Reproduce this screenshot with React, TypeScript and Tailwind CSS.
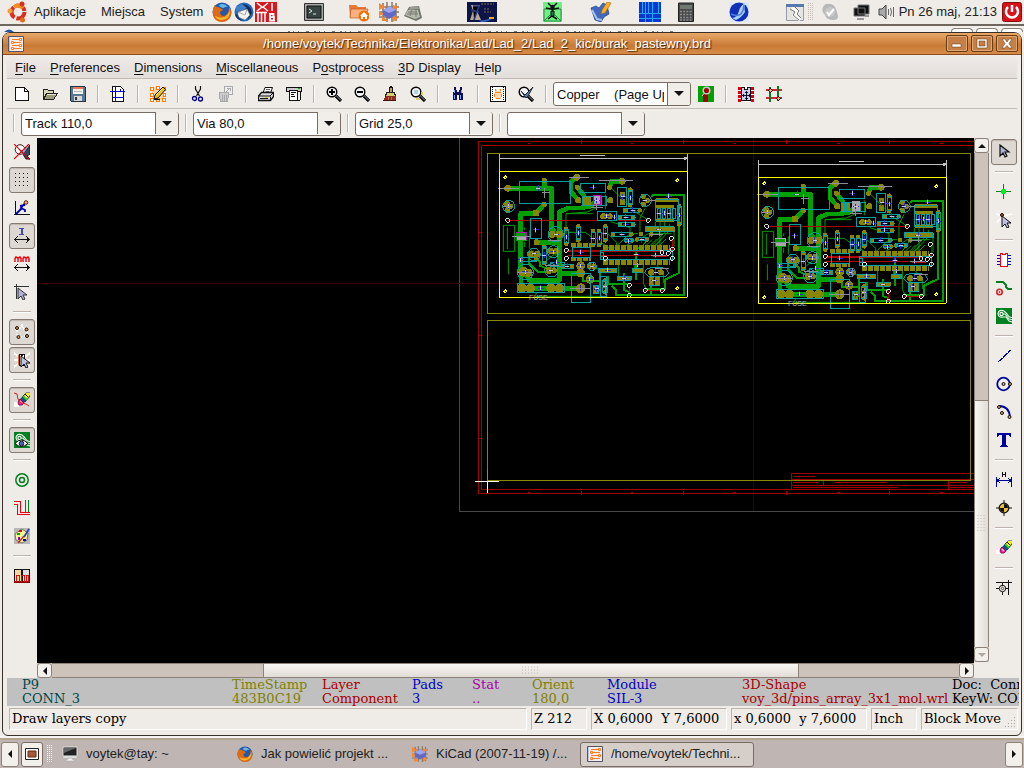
import type { ReactNode } from 'react'

interface Tool {
  label: string
  icon: ReactNode
  pressed?: boolean
}

const GREEN = '#00a000'
const OLIVE = '#868600'
const CYAN = '#00a0a0'

function Icon({ children, crisp = true }: { children: ReactNode; crisp?: boolean }) {
  return (
    <svg
      width="16"
      height="16"
      viewBox="0 0 16 16"
      fill="none"
      shapeRendering={crisp ? 'crispEdges' : 'auto'}
      className="shrink-0"
      aria-hidden="true"
    >
      {children}
    </svg>
  )
}

const cursorPath = 'M0 0v11l3-3 2 4 2-1-2-4h4z'

const magnifier = (
  <g shapeRendering="auto">
    <circle cx="6" cy="6" r="4.800" fill="#f4f4f8" stroke="#000" strokeWidth="1.400" />
    <path d="M10 10l5 5" stroke="#000" strokeWidth="3.200" />
    <path d="M10.500 10l4.500 4.500" stroke="#9a9aaa" strokeWidth="1" />
  </g>
)

const eraser = (
  <g shapeRendering="auto">
    <path d="M9 4l3-3h4v3l-5 6-3-3z" fill="#187838" stroke="#111" strokeWidth=".8" />
    <path d="M12 1h4v2l-3 4-3-3z" fill="#f8f020" />
    <path d="M11 2l3 3" stroke="#111" />
    <path d="M8 5l4 4-2 2-4-4z" fill="#105088" />
    <path d="M9 4l4 4" stroke="#20d840" strokeWidth="1.300" />
    <path d="M6 7l4 4-2 2H5l-1-2 1-3z" fill="#ff20a0" stroke="#700038" strokeWidth=".8" />
    <path d="M6 9l2 2" stroke="#ffc0f0" strokeWidth="1.500" />
  </g>
)

const greenZone = (
  <>
    <path d="M0 0h16v16H0z" fill="#008020" />
    <g shapeRendering="auto" stroke="#e8f4e8" strokeWidth="1.200">
      <path d="M16 9.500q-3 0-4-2T8 3Q3 1 2 5.500 2.500 10 7 9l3 0 3 4 3 1" />
      <circle cx="5.500" cy="6" r="1.600" />
      <path d="M7 6h2l4 5 3 .5" />
    </g>
  </>
)

const boardIcon = (
  <>
    <path d="M.5.500h15v15H.5z" fill="#f8ece8" stroke="#55556a" />
    <path d="M1 1h1v14H1z" fill="#b8c4f0" />
    <path d="M4 3.500h7M5 6.500h8M4 9.500h7M5 12.500h8" stroke="#ff7a20" />
    <path d="M11.500 2.500h2v2h-2zM3.500 5.500h2v2h-2zM11.500 8.500h2v2h-2zM3.500 11.500h2v2h-2z" fill="#fff0e0" stroke="#ff7a20" />
  </>
)

const fileTools: Tool[][] = [
  [
    {
      label: 'New',
      icon: <path d="M1.500 1.500h9l4 4v9h-13zM10.500 1.500v4h4" fill="#fff" stroke="#111" />,
    },
    {
      label: 'Open',
      icon: (
        <>
          <path d="M1.500 13.500v-10h4l1 1h5v3" fill="#d8d8b8" stroke="#222" />
          <path d="M1.500 13.500l3-6h11l-4 6z" fill="#9a9a7a" stroke="#222" />
          <path d="M5 8.500h9" stroke="#e8e8d0" />
        </>
      ),
    },
    {
      label: 'Save',
      icon: (
        <>
          <path d="M.5.500h14l1 1v14H1.500l-1-1z" fill="#5b7892" stroke="#223344" />
          <path d="M3 1h10v7H3z" fill="#f4f0ea" />
          <path d="M3 1h10v2H3z" fill="#e07a60" />
          <path d="M4 5.500h8" stroke="#bbb" />
          <path d="M4 10h8v5H4z" fill="#d8d8d8" />
          <path d="M5 11h2v3H5z" fill="#334" />
        </>
      ),
    },
  ],
  [
    {
      label: 'Page settings',
      icon: (
        <>
          <path d="M2.500.500h8l3 3v12h-11z" fill="#fff" stroke="#111" />
          <path d="M0 5.500h15M5.500 0v16M3 11.500h10M10.500 6v-3" stroke="#0000d0" />
        </>
      ),
    },
  ],
  [
    {
      label: 'Module editor',
      icon: (
        <>
          <path d="M2 2h12v12H2z" fill="#ffd0a0" />
          <path d="M.5 1.500h3v3h-3zM6.500.500h3v3h-3zM12.500 1.500h3v3h-3zM.5 7.500h3v3h-3zM.5 12.500h3v3h-3zM6.500 12.500h3v3h-3zM12.500 12.500h3v3h-3zM13.500 7.500h2v3h-2z" stroke="#ff7a00" fill="#fff" />
          <g shapeRendering="auto">
            <path d="M4 13l1-4 8-8 2.500 2.500L8 12z" fill="#e8c020" stroke="#111" />
            <path d="M6 9l7-7" stroke="#fff080" />
          </g>
          <path d="M4 13.500h6" stroke="#111" />
        </>
      ),
    },
  ],
  [
    {
      label: 'Cut',
      icon: (
        <g shapeRendering="auto">
          <path d="M5.500 0v3l4 7M10.500 0v3l-4 7" stroke="#111" strokeWidth="1.200" />
          <circle cx="4.500" cy="12.500" r="2" stroke="#000090" strokeWidth="1.300" />
          <circle cx="10.500" cy="13" r="2" stroke="#000090" strokeWidth="1.300" />
        </g>
      ),
    },
    {
      label: 'Copy',
      icon: (
        <>
          <path d="M6.500.500h8v8h-8z" fill="#eee" stroke="#aaa" />
          <path d="M8 6l4-4M9 2h3v3" stroke="#aaa" />
          <path d="M1.500 6.500h9v3l-1 6h-7l-1-6z" fill="#ccc" stroke="#aaa" />
          <path d="M4.500 9v6M6.500 9v6M8.500 9v6" stroke="#aaa" />
        </>
      ),
    },
  ],
  [
    {
      label: 'Print',
      icon: (
        <g shapeRendering="auto">
          <path d="M5 7l2-5.500h7.500l-2 5.500" fill="#fff" stroke="#111" />
          <path d="M8 3.500h4M7.500 5.500h4" stroke="#666" />
          <path d="M.5 10l3-3.500h12v4l-3 4H.5z" fill="#ddd" stroke="#111" strokeWidth="1.300" />
          <path d="M1 10h11l3-3M12.500 10.500V14" stroke="#111" />
          <path d="M2 12.500h8" stroke="#111" />
          <path d="M7 11h3v1H7z" fill="#e8d020" />
        </g>
      ),
    },
    {
      label: 'Plot',
      icon: (
        <>
          <path d="M.5 1.500h15v4H.5z" fill="#ccc" stroke="#111" />
          <path d="M3.500 4.500h8v10h-8z" fill="#fff" stroke="#111" />
          <path d="M5 6.500h5M5 8.500h3M5 10.500h4M14.500 5v9M12 14.500h2" stroke="#111" />
          <path d="M12 2h2v1h-2z" fill="#0a0" />
        </>
      ),
    },
  ],
  [
    { label: 'Zoom in', icon: <>{magnifier}<path d="M3 6h6M6 3v6" stroke="#000" strokeWidth="2" /></> },
    { label: 'Zoom out', icon: <>{magnifier}<path d="M3 6h6" stroke="#000" strokeWidth="2" /></> },
    {
      label: 'Redraw',
      icon: (
        <>
          <path d="M7.500 6V2.500l1-2h1l1 2V6" fill="#c0a060" stroke="#111" />
          <path d="M4.500 6.500h8l1 4h-10z" fill="#d8cf70" stroke="#222" />
          <path d="M4 10h10v5H1z" fill="#8b3020" />
          <path d="M1 14.500h13" stroke="#4a1008" />
          <path d="M6.500 11v3M9.500 11v3" stroke="#c06a50" />
        </>
      ),
    },
    {
      label: 'Zoom fit',
      icon: (
        <>
          {magnifier}
          <path d="M4 4h4v4H4z" fill="#b0d0e0" />
          <path d="M11 6h2v3h-2zM6 12h4v2H6z" fill="#d8d060" />
        </>
      ),
    },
  ],
  [
    {
      label: 'Find',
      icon: (
        <>
          <path d="M4 1h2v3h1v2h2V4h1V1h2v4l1 3v6h-4v-5H7v5H3V8l1-3z" fill="#101050" />
          <path d="M4.500 4v3M11.500 4v3M4.500 9v4M10.500 9v4" stroke="#80a0ff" />
        </>
      ),
    },
  ],
  [
    {
      label: 'Read netlist',
      icon: (
        <>
          <path d="M.5.500h15v15H.5z" fill="#fff" stroke="#111" />
          <path d="M2.500 1v14M13.500 1v14" stroke="#111" strokeDasharray="1 1" />
          <path d="M5 3h2v2h2V3h2v3l1 2-1 5H5L4 8l1-2z" fill="#ffd8b0" />
          <path d="M5 3v2M10.500 3v2M5 6.500h6M4.500 8v3M11.500 8v3M6 12.500h4" stroke="#ff7a10" />
        </>
      ),
    },
    {
      label: 'Check rules',
      icon: (
        <>
          {magnifier}
          <path d="M3 5l4 4 8-8-5 9-2 2z" fill="#607898" stroke="#203040" shapeRendering="auto" />
        </>
      ),
    },
  ],
]

const layerTools: Tool[][] = [
  [
    { label: 'Auto move', icon: (
      <>
        <path d="M1 0h14v16H1z" fill="#fff" />
        <path d="M1.500.500v15M14.500.500v15" stroke="#d80010" strokeWidth="3" strokeDasharray="3 1" />
        <path d="M3.500 1.500h3v2h3v-2h3v13h-9z" fill="#c8d0f0" stroke="#111" />
        <path d="M8.500 5v9M4 9.500h9M7 6.500h3M7 12.500h3M5.500 8v3M11.500 8v3" stroke="#101030" />
      </>
    ) },
    { label: 'Auto route', icon: (
      <>
        <path d="M0 4h16M0 12h16" stroke="#e02030" strokeWidth="2" />
        <path d="M4 1v15M12 0v15" stroke="#008020" strokeWidth="2" />
        <circle cx="4.500" cy="4.500" r="1.800" fill="#f8b070" stroke="#111" />
        <circle cx="12.500" cy="12.500" r="1.800" fill="#f8b070" stroke="#111" />
      </>
    ) },
  ],
]

const leftTools: Tool[][] = [
  [
    { label: 'DRC off', icon: (
      <g shapeRendering="auto">
        <circle cx="6" cy="5.500" r="4.800" fill="#fff" stroke="#222" />
        <path d="M7 7l3 2 6-8v9l-3 2 3 3h-4z" fill="#304860" stroke="#101820" />
        <path d="M6 6l3 3 4-6" stroke="#88a8c8" strokeWidth="1.500" />
        <path d="M0 0l16 16M15 0L0 15" stroke="#e00010" strokeWidth="1.200" />
      </g>
    ) },
    { label: 'Grid', pressed: true, icon: <path d="M1 1.500h15M1 5.500h15M1 9.500h15M1 13.500h15" stroke="#111" strokeDasharray="1 3" /> },
    { label: 'Polar coordinates', icon: (
      <>
        <path d="M1.500 1v14M0 14.500h16" stroke="#111" />
        <path d="M11 3L7 8l4 2v2M8 8L2 14M11 5L6 6" stroke="#0000b0" strokeWidth="1.800" shapeRendering="auto" />
        <circle cx="12" cy="2.500" r="1.800" fill="#f8b070" stroke="#5a2010" shapeRendering="auto" />
      </>
    ) },
    { label: 'Inches', pressed: true, icon: (
      <>
        <path d="M5 .500h5M5 6.500h5" stroke="#4848b8" />
        <path d="M7.500 0v7" stroke="#4848b8" strokeWidth="2" />
        <path d="M1 11.500h14M4 8l-3 3.500L4 15M12 8l3 3.500-3 3.500" stroke="#111" />
      </>
    ) },
    { label: 'Millimetres', icon: (
      <>
        <path d="M1 6V2.500L2 1l2 1v4M4 2l2-1 1 1.500V6M9 6V2.500L10 1l2 1v4M12 2l2-1 1 1.500V6" stroke="#f00010" strokeWidth="1.400" shapeRendering="auto" />
        <path d="M1 11.500h14M4 8l-3 3.500L4 15M12 8l3 3.500-3 3.500" stroke="#111" />
      </>
    ) },
    { label: 'Cursor shape', icon: (
      <>
        <path d="M0 2.500h15M2.500 0v15" stroke="#333" />
        <path d={cursorPath} transform="translate(4 4)" fill="#b0b0d8" stroke="#333" shapeRendering="auto" />
      </>
    ) },
  ],
  [
    { label: 'Show ratsnest', pressed: true, icon: (
      <>
        <path d="M3 4l9 1M12 5l2 8M4 13l9-1M2 4l2 9M8 0l1 5" stroke="#fff" strokeWidth="2" strokeDasharray="4 2" />
        <g fill="#d89050" stroke="#111" shapeRendering="auto">
          <circle cx="3" cy="4" r="1.500" /><circle cx="12.500" cy="5.500" r="1.500" />
          <circle cx="4.500" cy="13" r="1.500" /><circle cx="13" cy="12" r="1.500" />
        </g>
      </>
    ) },
    { label: 'Module ratsnest', pressed: true, icon: (
      <>
        <path d="M0 1l5 4M0 8h5M0 15l5-4M16 1l-5 4M16 8h-5M16 15l-5-4" stroke="#fff" strokeWidth="2" />
        <path d="M4.500 3v10" stroke="#e86a10" />
        <path d="M5.500 2.500h2v1h1v-1h2v11h-5z" fill="#fff" stroke="#111" />
        <path d={cursorPath} transform="translate(7 4)" fill="#c0c0e0" stroke="#111" shapeRendering="auto" />
      </>
    ) },
  ],
  [
    { label: 'Auto delete track', pressed: true, icon: (
      <>
        <path d="M0 10h5v5H0z" fill="#fff" />
        {eraser}
        <path d="M0 1l3 1 1 5 3 4 5 1 3 2" stroke="#e02020" shapeRendering="auto" />
      </>
    ) },
  ],
  [
    { label: 'Show zones', pressed: true, icon: (
      <g shapeRendering="auto">
        {greenZone}
        <path d="M1 11.500q6-7 13 0-7 6-13 0z" fill="#fff" stroke="#111" />
        <circle cx="7.500" cy="11.500" r="2.300" fill="#5060a0" stroke="#202050" />
      </g>
    ) },
  ],
  [
    { label: 'Show pads', icon: (
      <g shapeRendering="auto">
        <circle cx="8" cy="8" r="6.200" stroke="#008020" strokeWidth="1.500" />
        <circle cx="8" cy="8" r="2.500" stroke="#008020" strokeWidth="1.500" />
      </g>
    ) },
    { label: 'Show tracks', icon: (
      <>
        <path d="M0 1.500h6.500v11H16M0 4.500h3.500v10H16" stroke="#f00010" />
        <path d="M11.500 0v12M14.500 0v12" stroke="#008020" />
      </>
    ) },
    { label: 'High contrast', icon: (
      <>
        <path d="M0 0h16v16H0z" fill="#b8b8b8" />
        <path d="M8 1l6 4-1 7-5 3-6-3-1-6z" fill="#fff890" stroke="#333" strokeWidth=".6" shapeRendering="auto" />
        <path d="M5 2h3v2H5z" fill="#e00" /><path d="M3 5h3v2H3z" fill="#0a0" />
        <path d="M4 9h2v3H4z" fill="#80c" /><path d="M9 11h3v2H9z" fill="#00d" />
        <path d="M15 1l-5 8" stroke="#2040c0" strokeWidth="1.800" shapeRendering="auto" />
        <path d="M10 8l-6 7" stroke="#c02020" strokeWidth="1.300" shapeRendering="auto" />
      </>
    ) },
  ],
  [
    { label: 'Layers toolbar', icon: (
      <>
        <path d="M.5 1.500h7v13h-7z" fill="#f0d8a0" stroke="#111" />
        <path d="M8.500 1.500h7v13h-7z" fill="#e0e0e0" stroke="#111" />
        <path d="M0 14h16" stroke="#800" strokeWidth="2" />
        <path d="M2.500 14V7.500h3V14M7.500 14V7.500h3V14M12.500 14V7.500h2V14" stroke="#e01010" />
      </>
    ) },
  ],
]

const rightTools: Tool[][] = [
  [{ label: 'Select', pressed: true, icon: <path d={cursorPath} transform="translate(4 1)" fill="#b0b0d8" stroke="#111" strokeWidth="1.200" shapeRendering="auto" /> }],
  [
    { label: 'Highlight net', icon: (
      <>
        <path d="M0 7.500h15M7.500 0v15" stroke="#008020" />
        <circle cx="7.500" cy="7.500" r="2.500" fill="#00f020" />
      </>
    ) },
    { label: 'Local ratsnest', icon: (
      <g shapeRendering="auto">
        <path d="M0 2l6 2M16 2L8 4M1 10l4-4" stroke="#fff" strokeWidth="1.500" />
        <path d={cursorPath} transform="translate(6 4)" fill="#c0c0e0" stroke="#111" />
        <circle cx="6" cy="3" r="1.500" fill="#a05020" stroke="#111" />
      </g>
    ) },
  ],
  [
    { label: 'Add module', icon: (
      <>
        <path d="M1 3.500h14M1 6.500h14M1 9.500h14M1 12.500h14" stroke="#0000d0" />
        <path d="M4.500 1.500h2v1h3v-1h2v13h-7z" fill="#fff" stroke="#f00010" />
      </>
    ) },
    { label: 'Add track', icon: (
      <g shapeRendering="auto">
        <path d="M0 2h7l3 3v2l2 2h4" stroke="#008020" strokeWidth="2" />
        <circle cx="3.500" cy="12" r="2.700" fill="#fff" stroke="#d02020" strokeWidth="1.600" />
        <circle cx="3.500" cy="12" r="1" fill="#d02020" />
      </g>
    ) },
    { label: 'Add zone', icon: greenZone },
  ],
  [
    { label: 'Add line', icon: <path d="M2 14L15 2" stroke="#0000a0" strokeWidth="1.300" strokeDasharray="6 1" /> },
    { label: 'Add circle', icon: (
      <g shapeRendering="auto">
        <circle cx="7.500" cy="8" r="6.300" stroke="#0000a0" strokeWidth="1.800" />
        <circle cx="7.500" cy="8" r="1.500" fill="#d8a070" stroke="#111" />
        <circle cx="14" cy="8" r="1.500" fill="#d8a070" stroke="#111" />
      </g>
    ) },
    { label: 'Add arc', icon: (
      <g shapeRendering="auto">
        <path d="M3 2q10 0 11 11" stroke="#0000a0" strokeWidth="1.800" />
        <g fill="#d8a070" stroke="#111">
          <circle cx="3" cy="3" r="1.500" /><circle cx="6" cy="9" r="1.500" /><circle cx="13.500" cy="13" r="1.500" />
        </g>
      </g>
    ) },
    { label: 'Add text', icon: <path d="M1 1h14v4h-1l-1-2h-3v10l2 1v1H4v-1l2-1V3H3L2 5H1z" fill="#0000a0" /> },
  ],
  [
    { label: 'Add dimension', icon: (
      <>
        <path d="M6.500 0v5M9.500 0v5M7 2.500h2" stroke="#111" />
        <path d="M.5 5v10M15.500 5v10M1 8.500h14M4 6L1 8.500 4 11M12 6l3 2.500L12 11" stroke="#0000a0" />
      </>
    ) },
    { label: 'Add target', icon: (
      <g shapeRendering="auto">
        <path d="M0 8h16M8 0v16" stroke="#111" />
        <circle cx="8" cy="8" r="4.800" fill="#e8c040" stroke="#111" strokeWidth="1.300" />
        <path d="M8 8V4a4 4 0 0 1 4 4zM8 8v4a4 4 0 0 1-4-4z" fill="#111" />
      </g>
    ) },
  ],
  [{ label: 'Delete item', icon: <><path d="M0 10h5v4H0z" fill="#fff" />{eraser}</> }],
  [
    { label: 'Offset origin', icon: (
      <>
        <path d="M0 2.500h16M12.500 0v15M0 8.500h3M9 8.500h3M6.500 3v3M6.500 12v3" stroke="#111" />
        <circle cx="6.500" cy="8.500" r="3.200" stroke="#111" shapeRendering="auto" />
        <circle cx="6.500" cy="8.500" r="1.200" stroke="#555" shapeRendering="auto" />
      </>
    ) },
  ],
]

// One board, drawn on a grid of three units to the pixel
const thickTracks = [
  'M53 130h132v120l14 18', 'M163 106v24', 'M163 178l-26 27H92v175l12 8', 'M260 98l-17 12v30l22 26',
  'M397 109h-32l-6 18', 'M320 168l-20 16-30 5h-35l-27 12v205h-90l-12-20', 'M140 292h66', 'M206 385h64l10-8',
  'M90 430h182', 'M262 127l22 28', 'M93 390v36',
]
const mediumTracks = [
  'M484 155l5-6h94v302H377v-16l-12-12', 'M567 178v206l-42 20v28h-55', 'M438 405v-88l8-10', 'M118 320v36l25 24h42',
  'M402 385v50l15 6', 'M483 380v68', 'M355 392v25h62', 'M280 380v28h50', 'M132 330l18 20v12l40 18', 'M330 378v60',
]
const thinTracks = [
  'M228 268v-62l64-5 30-14', 'M228 206h80', 'M365 130l45 45 20 20', 'M346 148v45', 'M428 196l48 30', 'M465 190l-15 30v40',
  'M362 230l58 18v25', 'M330 290l35 25', 'M265 285l10 15', 'M236 262h50l20 15', 'M350 262l30 30v18', 'M510 230v80',
  'M524 232v30l-40 42', 'M538 236v20l-44 50', 'M552 260v45', 'M496 230v20l-40 55', 'M372 310l48-44h24', 'M392 312l50-30',
  'M475 284l-24 24M486 284l-24 24M500 282l-26 26M514 282l-26 26M528 282l-26 26', 'M386 355v40l20 5', 'M434 350v28',
  'M216 330h-26l-18 15', 'M118 256v52l12 14', 'M300 355l28 21h40', 'M454 280l20-14h70', 'M140 442l-4 12h210', 'M55 340v48',
  'M40 241h34v78H40zM52 247v65', 'M460 355v60l10 20', 'M500 360l20 24v30', 'M90 255v-8M97 255v-8M104 255v-8M90 290v16M97 290v16M104 290v16',
]
const outlines: [number, number, number, number][] = [
  [88, 109, 153, 66], [272, 115, 74, 27], [278, 154, 72, 27], [382, 127, 27, 58], [415, 136, 13, 44],
  [121, 220, 33, 60], [323, 200, 56, 26], [497, 163, 68, 64], [331, 316, 218, 28], [247, 307, 54, 31],
  [82, 415, 141, 27], [245, 386, 56, 86], [331, 394, 20, 60], [400, 190, 50, 13], [385, 211, 48, 13], [385, 232, 48, 13],
  [259, 247, 12, 36], [304, 262, 12, 38], [322, 262, 12, 38], [340, 247, 12, 36], [223, 254, 12, 40], [366, 264, 60, 10],
  [404, 281, 25, 10], [442, 278, 32, 10], [468, 246, 84, 14], [562, 184, 12, 52], [157, 306, 12, 50], [182, 352, 42, 12],
  [312, 421, 14, 24], [338, 408, 14, 36], [326, 371, 54, 11], [384, 395, 38, 11], [428, 371, 28, 11], [478, 396, 30, 26],
  [90, 339, 46, 10], [216, 360, 34, 10], [504, 190, 8, 30], [519, 190, 8, 30], [534, 190, 8, 30], [549, 190, 8, 30],
]
const rounds: [number, number, number][] = [
  [197, 268, 23], [56, 184, 18], [466, 166, 18], [132, 328, 19], [106, 381, 24], [184, 376, 20], [190, 320, 18], [306, 364, 13],
]
const pads: [number, number, number][] = [
  [53, 130, 10], [163, 106, 8], [163, 178, 8], [260, 97, 10], [262, 127, 8], [265, 166, 9], [397, 109, 10], [359, 127, 8],
  [361, 166, 9], [140, 292, 9], [187, 268, 11], [208, 268, 11], [272, 430, 15], [300, 403, 13], [96, 430, 14], [121, 430, 14],
  [183, 430, 14], [208, 430, 14], [272, 362, 13], [272, 384, 13], [100, 380, 15], [115, 384, 12], [122, 328, 11], [140, 328, 10],
  [178, 376, 11], [192, 376, 9], [183, 318, 10], [198, 318, 9], [300, 364, 9], [312, 364, 8], [52, 178, 9], [62, 184, 8],
  [52, 195, 8], [460, 154, 8], [460, 178, 8], [472, 166, 8], [340, 214, 9], [360, 214, 9], [484, 382, 9], [513, 382, 9],
  [229, 252, 7], [229, 296, 7], [265, 244, 7], [265, 286, 7], [310, 258, 7], [310, 300, 7], [328, 258, 7], [328, 300, 7],
  [346, 244, 7], [346, 286, 7], [421, 134, 7], [421, 180, 7], [407, 196, 7], [449, 196, 7], [390, 217, 7], [430, 217, 7],
  [390, 238, 7], [430, 238, 7], [369, 268, 7], [424, 268, 7], [453, 268, 7], [484, 268, 7], [408, 287, 7], [426, 287, 7],
  [441, 284, 7], [470, 284, 7], [568, 184, 7], [568, 238, 7], [163, 306, 7], [163, 354, 7], [92, 344, 7], [138, 344, 7],
  [346, 406, 7], [346, 424, 7], [346, 442, 7], [318, 426, 7], [318, 440, 7], [220, 364, 7], [246, 364, 7],
]
const padBlocks: [number, number, number, number][] = [
  [129, 196, 18, 18], [280, 156, 22, 23], [390, 140, 15, 16], [390, 162, 15, 18], [497, 160, 68, 12], [497, 180, 56, 9],
  [497, 221, 56, 10], [466, 245, 88, 15], [326, 370, 56, 13], [383, 394, 42, 12], [427, 370, 31, 13], [478, 396, 13, 28],
  [495, 396, 14, 28],
]
const vias: [number, number][] = [
  [53, 226], [475, 226], [544, 280], [547, 313], [535, 325], [516, 322], [547, 340], [346, 340], [229, 316], [229, 340],
  [418, 421], [418, 451], [466, 436], [517, 436],
]
const labels: [number, number][] = [
  [145, 130], [310, 127], [321, 168], [56, 184], [398, 155], [421, 158], [466, 166], [137, 254], [197, 268], [350, 214],
  [408, 217], [408, 238], [428, 196], [536, 154], [508, 253], [265, 265], [310, 280], [328, 280], [346, 265], [229, 275],
  [396, 268], [415, 287], [456, 284], [273, 322], [132, 325], [106, 381], [184, 376], [190, 320], [306, 364], [152, 430],
  [272, 430], [300, 403], [346, 424], [354, 376], [403, 400], [442, 360], [498, 382], [496, 331], [438, 328], [568, 211],
  [508, 205], [523, 205], [538, 205], [92, 344], [163, 331], [200, 352], [232, 364], [272, 362], [492, 408], [375, 217], [320, 432],
]
const greyLines = [
  'M24 130h64M237 97h60M155 142h24M328 106h100M40 184h26M302 187h38', 'M67 274h55M173 286h40M480 268h40M484 331h44M495 370h42M430 360h24',
  'M80 382h50M165 362h42M240 430h64M480 166h18', 'M321 175v20M321 182h-12M163 130v30M346 410v35M203 307v28M508 252v22M310 352v26',
]
const holes: [number, number][] = [[46, 97], [562, 106], [46, 439], [562, 430]]

function Board({ x, y, accent }: { x: number; y: number; accent: string }) {
  return (
    <>
      <g transform={`translate(${x} ${y}) scale(.33333)`} fill="none">
        <g stroke={GREEN} strokeLinejoin="round">
          <g strokeWidth="14">{thickTracks.map((d) => <path key={d} d={d} />)}</g>
          <g strokeWidth="6">{mediumTracks.map((d) => <path key={d} d={d} />)}</g>
          <g strokeWidth="3">{thinTracks.map((d) => <path key={d} d={d} />)}</g>
        </g>
        <path d="M78 260h32v28H78z" fill={GREEN} />
        <path d="M53 226h422M230 318h286l31-5M230 331h300M346 343h200M466 436h52M418 421v30M547 285v60M490 335h40" stroke="#b00000" strokeWidth="4" />
        <g fill={OLIVE}>
          {pads.map(([cx, cy, r]) => <circle key={`${cx}-${cy}`} cx={cx} cy={cy} r={r} />)}
          {padBlocks.map(([bx, by, w, h]) => <rect key={`${bx}-${by}`} x={bx} y={by} width={w} height={h} />)}
        </g>
        <path d="M340 307h200M340 352h200" stroke={OLIVE} strokeWidth="14" strokeDasharray="15 3" />
        <path d="M244 300h60M244 343h60" stroke={OLIVE} strokeWidth="13" strokeDasharray="15 3" />
        <g stroke={CYAN} strokeWidth="3">
          {outlines.map(([ox, oy, w, h]) => <rect key={`${ox}-${oy}`} x={ox} y={oy} width={w} height={h} />)}
          {rounds.map(([cx, cy, r]) => <circle key={`${cx}-${cy}`} cx={cx} cy={cy} r={r} />)}
          <path d="M470 372q28-10 60 0l6 12-10 12h-50l-12-14zM286 154v27M292 154v27M335 154v27M331 322h10v14h-10" />
        </g>
        <path d="M310 152h22v28h-22z" fill="#b0a0b0" stroke={accent} strokeWidth="3" />
        <path d="M79 262h31v24" stroke={accent} strokeWidth="3" />
        <path d="M82 276h26v10H82z" fill="#a8a8a8" />
        <g stroke="#2828d8" strokeWidth="3">
          {labels.map(([lx, ly]) => <path key={`${lx}-${ly}`} d={`M${lx - 9} ${ly}h18M${lx} ${ly - 9}v18`} />)}
        </g>
        <g stroke="#c8c8e8" strokeWidth="3">
          {labels.map(([lx, ly], i) => (
            <path key={`${lx}-${ly}`} d={i % 2 ? `M${lx} ${ly - 6}v12` : `M${lx - 6} ${ly}h12`} />
          ))}
        </g>
        <g stroke="#8c8c9c" strokeWidth="3">{greyLines.map((d) => <path key={d} d={d} />)}</g>
        <g stroke="#e0e0e0" strokeWidth="3">
          {vias.map(([cx, cy]) => <circle key={`${cx}-${cy}`} cx={cx} cy={cy} r="6" />)}
        </g>
        <g stroke="#ff0" strokeWidth="3">
          {holes.map(([hx, hy]) => <path key={`${hx}-${hy}`} d={`M${hx - 3} ${hy - 3}h6v6h-6zM${hx} ${hy - 6}v3M${hx - 6} ${hy}h3`} />)}
          <path d="M28.500 79.500h564v378h-564z" />
        </g>
        <path d="M28.500 28v50M592.500 28v50M28 40.500h564M270 31.500h75M30 36v10M583 37h6v6h-6" stroke="#c0c0c0" strokeWidth="3" />
      </g>
      <text x={x + 39} y={y + 155} fontSize="7" fill="#b0b0b0" fontFamily="Liberation Sans, sans-serif">FUSE</text>
    </>
  )
}

function BoardCanvas() {
  return (
    <svg className="block h-full w-full bg-black" role="img" aria-label="Board layout">
      {/* drawing units are page pixels, shifted by the corner of the work area */}
      <g transform="translate(-37 -138)" fill="none" shapeRendering="crispEdges">
        <path d="M459.500 130v381.500h700" stroke="#484848" />
        <path d="M37 283.500h1200M753.500 138v373" stroke="#380000" />
        <g stroke="#a00000">
          <path d="M1200 141.500H478.500v351.500h721.500M1200 145.500H481.500v344h718.500" />
          <path d="M581.500 491v4M683.500 491v4M786.500 491v4M889.500 491v4M581.500 140v4M683.500 140v4M786.500 140v4M889.500 140v4" />
          <path d="M528 492h2M631 492h2M734 492h2M837 492h3M940 492h3M528 143.500h2M631 143.500h2M734 143.500h2M837 143.500h3M940 143.500h3" />
          <path d="M478 232.500h3M478 335.500h3M478 438.500h3" />
          <path d="M1100 473.500H791.500v16M791 479.500h300M791 485.500h300M823.500 480v5M948.500 480v9" />
          <path d="M793 476.500h22M793 482.500h25M834 482.500h53M793 487.500h104M950 482.500h17M950 487.500h30" />
        </g>
        <g stroke="#868600">
          <path d="M487.500 153.500h483v160h-483zM487.500 320.500h483v160h-483z" />
        </g>
        <path d="M487.500 469v12" stroke="#7878f0" />
        <path d="M475 481.500h24M487.500 481v12" stroke="#fff" />
        <Board x={490} y={145} accent="#c000c0" />
        <Board x={749} y={151} accent="#a8a8b0" />
      </g>
    </svg>
  )
}

function ToolButton({ tool }: { tool: Tool }) {
  return (
    <button
      type="button"
      aria-label={tool.label}
      title={tool.label}
      className="flex h-7 w-7 shrink-0 items-center justify-center p-px"
    >
      <span
        className={
          tool.pressed
            ? 'flex h-[26px] w-[26px] items-center justify-center rounded-[3px] border border-[#857b72] bg-[#ddd8d2] shadow-[inset_0_1px_1px_#c0b8b0]'
            : 'flex h-[26px] w-[26px] items-center justify-center'
        }
      >
        <Icon>{tool.icon}</Icon>
      </span>
    </button>
  )
}

function VerticalRule() {
  return (
    <div className="flex h-[18px] w-3 shrink-0 justify-center">
      <div className="w-[2px] border-l border-r border-l-[#bdb5ad] border-r-white" />
    </div>
  )
}

function ToolRow({ groups }: { groups: Tool[][] }) {
  return groups.map((group, i) => (
    <div key={i} className="flex items-center">
      {group.map((tool) => <ToolButton key={tool.label} tool={tool} />)}
      {i < groups.length - 1 && <VerticalRule />}
    </div>
  ))
}

function ToolColumn({ groups }: { groups: Tool[][] }) {
  return (
    <div className="flex w-[30px] shrink-0 flex-col items-center">
      {groups.map((group, i) => (
        <div key={i} className="flex flex-col items-center">
          {group.map((tool) => <ToolButton key={tool.label} tool={tool} />)}
          {i < groups.length - 1 && (
            <div className="flex h-3 items-center">
              <div className="h-[2px] w-[18px] border-t border-b border-t-[#bdb5ad] border-b-white" />
            </div>
          )}
        </div>
      ))}
    </div>
  )
}

function Combo({ label, value, width }: { label: string; value: string; width: string }) {
  return (
    <div className={`relative h-6 shrink-0 ${width}`}>
      <select
        aria-label={label}
        className="h-6 w-full appearance-none rounded-[3px] border border-[#776d64] bg-white pr-[26px] pl-[3px] text-[13px] text-[#111]"
      >
        <option>{value}</option>
      </select>
      <span className="pointer-events-none absolute inset-y-px right-px flex w-[23px] items-center justify-center rounded-r-[2px] border-l border-[#776d64] bg-[#f1eeea]">
        <svg width="10" height="5" viewBox="0 0 10 5" aria-hidden="true"><path d="M0 0h10L5 5z" fill="#111" /></svg>
      </span>
    </div>
  )
}

function ArrowButton({ label, path, size, dim }: { label: string; path: string; size: string; dim?: boolean }) {
  return (
    <button
      type="button"
      aria-label={label}
      className={`flex shrink-0 items-center justify-center rounded-[3px] border border-[#8b8178] bg-[#f3f0ec] ${size}`}
    >
      <svg width="8" height="8" viewBox="0 0 8 8" aria-hidden="true"><path d={path} fill={dim ? '#b0a8a0' : '#111'} /></svg>
    </button>
  )
}

function Grip({ color = '#fff' }: { color?: string }) {
  return (
    <svg width="6" height="18" viewBox="0 0 6 18" shapeRendering="crispEdges" aria-hidden="true">
      <path d="M.5 0v18M2.500 0v18M4.500 0v18" stroke={color} strokeDasharray="1 1" />
    </svg>
  )
}

function Firefox({ size }: { size: number }) {
  return (
    <svg width={size} height={size} viewBox="0 0 20 20" className="shrink-0" aria-hidden="true">
      <circle cx="10" cy="10" r="9.500" fill="#2458a8" />
      <path d="M7 3q5-3 9 2-3-1-4 1-4 0-5-3z" fill="#68b8e8" />
      <path d="M3 3q0 2 3 2 3 1 5 3l-3 2q0 4 4 4 5-1 5-9 3 4 2 8-2 7-9 7-8 0-9-8-1-5 2-9z" fill="#e06a10" />
      <path d="M18 7q1 10-8 11-5 0-7-4 8 4 12-1 3-3 3-6z" fill="#f8b830" />
    </svg>
  )
}

function ChipIcon({ size }: { size: number }) {
  return (
    <svg width={size} height={size} viewBox="0 0 20 20" className="shrink-0" aria-hidden="true">
      <path d="M4 1v18M8 0v20M13 0v20M17 1v18M0 5h20M0 10h20M0 15h20" stroke="#8c7868" strokeWidth="1.500" />
      <path d="M0 1l6 4-6 3zM14 3l6 2-6 3zM0 9l5 3-5 2zM3 14l6 5H3zM13 13l6 3-5 4z" fill="#f88830" />
      <path d="M4 8l7-4 6 4v5l-7 4-6-4z" fill="#6068c8" />
      <path d="M4 8l7-4 6 4-7 3z" fill="#a0a4e8" />
    </svg>
  )
}

function Monitor() {
  return (
    <svg width="16" height="16" viewBox="0 0 16 16" aria-hidden="true">
      <path d="M1 1h14v9H1z" fill="#222" stroke="#ddd" />
      <path d="M2 2h12l-12 5z" fill="#666" />
      <path d="M1 10h14v2H1zM6 12h4v1l3 2H3l3-2z" fill="#f0f0f0" stroke="#aaa" strokeWidth=".5" />
    </svg>
  )
}

interface Launcher {
  label: string
  gap: string
  width: number
  art: ReactNode
}

// gap is the room left of the launcher, art is drawn 20 units high
const launchers: Launcher[] = [
  { label: 'Firefox', gap: 'ml-2', width: 20, art: <Firefox size={20} /> },
  { label: 'Thunderbird', gap: 'ml-[2px]', width: 20, art: (
    <>
      <circle cx="10" cy="10" r="9.500" fill="#2868b8" />
      <path d="M9 2q8 1 9 9l-4 7q2-7-1-10-3-2-8-3z" fill="#102c60" />
      <path d="M4 10l9-3 3 6-5 5-7-3z" fill="#f4f4f0" stroke="#777" strokeWidth=".6" />
      <path d="M4 10l7 3 2-6" fill="none" stroke="#aaa" />
      <path d="M2 5l6-3 5 4-5 2-6 1z" fill="#4080c8" />
      <path d="M1 12q1 6 9 7-5-2-6-6z" fill="#183870" />
    </>
  ) },
  { label: 'Lab', gap: 'ml-px', width: 22, art: (
    <>
      <path d="M0 0h22v20H0z" fill="#d81820" />
      <path d="M3 11v9M6.500 11v9M10 11v9M1 10.500h11" stroke="#fff" strokeWidth="1.500" />
      <path d="M2 1l5 4-5 4M13 1L8 5l5 4M17 1v8" stroke="#fff" strokeWidth="1.500" fill="none" />
      <path d="M15 12v7M14 12h4.500v3.200H15h4v3.300h-5" fill="none" stroke="#fff" strokeWidth="1.800" />
    </>
  ) },
  { label: 'Terminal', gap: 'ml-[27px]', width: 20, art: (
    <>
      <path d="M.5 1.500h19v17H.5z" fill="#a8a8a4" stroke="#333" />
      <path d="M3 4h14v12H3z" fill="#384444" stroke="#111" />
      <path d="M5 7l3 2-3 2M9 12h3" fill="none" stroke="#d8e8d8" />
    </>
  ) },
  { label: 'Home folder', gap: 'ml-[25px]', width: 20, art: (
    <>
      <path d="M0 3h7l2 2h8v10H1z" fill="#e87838" />
      <path d="M2 7h17l-2 9H1z" fill="#f8b080" stroke="#c85a20" strokeWidth=".7" />
      <circle cx="15" cy="14" r="5.500" fill="#f87000" />
      <path d="M11 14l4-4 4 4h-1v3h-2v-2h-2v2h-2v-3z" fill="#fff" />
    </>
  ) },
  { label: 'KiCad', gap: 'ml-[10px]', width: 20, art: <ChipIcon size={20} /> },
  { label: 'Scanner', gap: 'ml-1', width: 20, art: (
    <>
      <path d="M6 5l10-1 3 12-6 3-12-5z" fill="#70746a" />
      <path d="M7 5l8-1 1 3-10 1z" fill="#989c90" />
      <path d="M5 8l10 0 2 7-5 2-10-4z" fill="#b8bcb0" />
      <path d="M5 10h9M4 12h11M9 8l-2 6M13 8v7" stroke="#787c70" />
    </>
  ) },
  { label: 'Workspace', gap: 'ml-[44px]', width: 30, art: (
    <>
      <path d="M0 0h30v20H0z" fill="#0c1448" />
      <path d="M4 3h9l-3 6 4 9H3l3-9z" fill="#b8a890" />
      <path d="M6 4h6l-5 14M4 8l8 2" stroke="#283880" strokeWidth="1.500" />
      <path d="M14 2h13M17 7h6M17 10h7" stroke="#a08040" strokeWidth=".8" strokeDasharray="2 1" />
      <path d="M12 18q8 1 12-3h3q-4 5-13 5z" fill="#3060c0" />
      <path d="M22 15h5v2h-5z" fill="#e0b030" />
    </>
  ) },
  { label: 'Xcircuit', gap: 'ml-[46px]', width: 19, art: (
    <>
      <path d="M0 0h19v20H0z" fill="#70f080" />
      <path d="M1 7h17v12H1zM1 19l6-6M18 19l-6-6" fill="none" stroke="#209040" />
      <path d="M5 1l3 3M14 1l-3 3M3 6l5 1h3l5-1M9.500 5v9M5 17l4-3 5 3" fill="none" stroke="#111" strokeWidth="1.500" />
      <circle cx="9.500" cy="5" r="2.300" fill="#111" />
      <path d="M8 9h3v5H8z" fill="#208050" stroke="#111" />
    </>
  ) },
  { label: 'Notes', gap: 'ml-[28px]', width: 22, art: (
    <>
      <path d="M1 6l5-2 3 2 4-5 4 2 2 9-5 3-3 5-6-2z" fill="#4068c0" stroke="#204080" strokeWidth=".7" />
      <path d="M2 8l5 9 5 1" fill="none" stroke="#a8c0f0" strokeWidth="2" />
      <path d="M17 0l4 1-6 10-4 1 1-4z" fill="#f8b020" stroke="#a86000" strokeWidth=".6" />
    </>
  ) },
  { label: 'Monitor', gap: 'ml-[27px]', width: 22, art: (
    <>
      <path d="M0 0h22v20H0z" fill="#0838d0" />
      <path d="M3.500 0v11M6.500 0v11M9.500 0v11M13.500 0v20M19.500 0v11M0 11.500h22M0 16.500h22M6.500 12v8" stroke="#20a8f8" />
    </>
  ) },
  { label: 'Calculator', gap: 'ml-[16px]', width: 18, art: (
    <>
      <path d="M1.500 1h15v18.500h-15z" fill="#484848" stroke="#222" />
      <path d="M3 3h12v4H3z" fill="#707870" />
      <path d="M3 9.500h12M3 12.500h12M3 15.500h12M3 18h12" stroke="#909090" strokeWidth="1.500" strokeDasharray="2 1.200" />
    </>
  ) },
  { label: 'Seamonkey', gap: 'ml-[34px]', width: 20, art: (
    <>
      <path d="M0 0h20v20H0z" fill="#dfe8f8" />
      <circle cx="10" cy="10" r="9.500" fill="#1030b8" />
      <path d="M3 16q5 0 7-7 1-5 6-8-1 6 0 9-4 6-9 8z" fill="#a8d0f8" />
      <path d="M2 12q6 3 10 0 3-4 3-9" fill="none" stroke="#4878e0" strokeWidth="1.500" />
    </>
  ) },
]

function TopPanel() {
  return (
    <header className="flex h-[26px] shrink-0 items-center border-b-2 border-b-[#6f675e] bg-[#efebe7] text-[13px] text-[#222]">
      <svg width="22" height="22" viewBox="0 0 22 22" className="ml-[7px]" aria-hidden="true">
        <circle cx="11" cy="11" r="6.500" fill="none" stroke="#d83020" strokeWidth="4" strokeDasharray="11.600 2" />
        <path d="M7 6a6.500 6.500 0 0 1 9 1" fill="none" stroke="#f09020" strokeWidth="4" />
        <circle cx="3" cy="10" r="2.500" fill="#f0a030" />
        <circle cx="15" cy="3" r="2.500" fill="#d83020" />
        <circle cx="15.500" cy="19" r="2.500" fill="#e86a18" />
      </svg>
      <nav className="mr-px ml-[5px] flex gap-[15px]">
        <button type="button">Aplikacje</button>
        <button type="button">Miejsca</button>
        <button type="button">System</button>
      </nav>
      {launchers.map((l) => (
        <button key={l.label} type="button" aria-label={l.label} className={`shrink-0 ${l.gap}`}>
          <svg width={l.width} height="20" viewBox={`0 0 ${l.width} 20`} className="block" aria-hidden="true">{l.art}</svg>
        </button>
      ))}
      <div className="ml-auto flex shrink-0 items-center">
        <svg width="18" height="17" viewBox="0 0 18 17" aria-hidden="true">
          <path d="M.5.500h17v16H.5z" fill="#e4e4e0" stroke="#99a" />
          <path d="M0 0h18v3H0z" fill="#5878b0" />
          <path d="M6 4l6 4-4 3 6 5" fill="none" stroke="#fff" strokeWidth="3" />
          <path d="M4 5l5 3-2 3 6 5M9 3l4 4-2 3 4 4" fill="none" stroke="#777" />
        </svg>
        <span className="ml-1"><Grip color="#c4bcb4" /></span>
        <svg width="18" height="18" viewBox="0 0 18 18" className="ml-[7px]" aria-hidden="true">
          <path d="M5 1q8-1 10 5l2 7q0 4-4 4-8 0-9-5-4-4-2-8 1-2 3-3z" fill="#b8b8b8" />
          <circle cx="9" cy="9" r="5" fill="#c8c8c8" />
          <path d="M6 9l2 3 5-6" fill="none" stroke="#fff" strokeWidth="2" />
        </svg>
        <svg width="18" height="18" viewBox="0 0 18 18" className="ml-[14px]" aria-hidden="true">
          <path d="M5 2h11v9H5zM1 5h11v8H1z" fill="#111" stroke="#777" />
          <path d="M4 15h7v2H4zM12 12h4v2h-4z" fill="#999" />
        </svg>
        <svg width="16" height="16" viewBox="0 0 16 16" className="ml-[7px]" aria-hidden="true">
          <path d="M1 5h3l4-4v14l-4-4H1z" fill="#aaa" stroke="#444" />
          <path d="M10.500 5v6M12.500 4q2 4 0 8M15.500 3v10" fill="none" stroke="#666" />
        </svg>
        <span className="ml-[5px] whitespace-nowrap">Pn 26 maj, 21:13</span>
        <button type="button" aria-label="Shut down" className="mr-[2px] ml-[5px]">
          <svg width="20" height="20" viewBox="0 0 20 20" className="block" aria-hidden="true">
            <rect x=".5" y=".5" width="19" height="19" rx="2" fill="#d81018" stroke="#801010" />
            <path d="M6 5a6 6 0 1 0 8 0M10 3v7" fill="none" stroke="#fff" strokeWidth="2.500" />
          </svg>
        </button>
      </div>
    </header>
  )
}

const menus = ['File', 'Preferences', 'Dimensions', 'Miscellaneous', 'Postprocess', '3D Display', 'Help']

const moduleInfo = [
  { head: 'P9', value: 'CONN_3', style: 'w-[210px] text-[#004848]' },
  { head: 'TimeStamp', value: '483B0C19', style: 'w-[90px] text-[#808000]' },
  { head: 'Layer', value: 'Component', style: 'w-[90px] text-[#a80000]' },
  { head: 'Pads', value: '3', style: 'w-[60px] text-[#0000c0]' },
  { head: 'Stat', value: '..', style: 'w-[60px] text-[#a800a8]' },
  { head: 'Orient', value: '180,0', style: 'w-[75px] text-[#808000]' },
  { head: 'Module', value: 'SIL-3', style: 'w-[135px] text-[#0000c0]' },
  { head: '3D-Shape', value: 'voy_3d/pins_array_3x1_mol.wrl', style: 'w-[210px] text-[#a80000]' },
  { head: 'Doc:  Conn', value: 'KeyW: CON', style: 'min-w-0 flex-1 text-black' },
]

const statusCells = [
  { text: 'Draw layers copy', style: 'min-w-0 flex-1' },
  { text: 'Z 212', style: 'w-14' },
  { text: 'X 0,6000  Y 7,6000', style: 'w-[136px]' },
  { text: 'x 0,6000  y 7,6000', style: 'w-[136px]' },
  { text: 'Inch', style: 'w-[46px]' },
  { text: 'Block Move', style: 'w-[97px]' },
]

const tasks = [
  { title: 'voytek@tay: ~', icon: <Monitor /> },
  { title: 'Jak powielić projekt ...', icon: <Firefox size={16} /> },
  { title: 'KiCad (2007-11-19) /...', icon: <ChipIcon size={16} /> },
  { title: '/home/voytek/Techni...', icon: <Icon crisp={false}>{boardIcon}</Icon>, active: true },
]

const captionButtons = [
  { label: 'Minimize', path: 'M3 8h9v3H3z' },
  { label: 'Maximize', path: 'M3 3h10v9H3zM5 5v5h6V5z' },
  { label: 'Close', path: 'M3 3h3l2 3 2-3h3l-3 4.500 3 4.500h-3L8 9.500 6 12H3l3-4.500z' },
]

function TitleBar() {
  return (
    <div className="flex h-[22px] shrink-0 items-center rounded-t-md border-b border-b-[#8a4c1c] bg-linear-to-b from-[#e8a868] from-0% via-[#c87a36] via-60% to-[#d88c48] pr-[3px] pl-[5px]">
      <Icon crisp={false}>{boardIcon}</Icon>
      <h1 className="min-w-0 flex-1 truncate pl-1 text-center text-[13px] leading-5 text-white [text-shadow:1px_1px_1px_#402000]">
        /home/voytek/Technika/Elektronika/Lad/Lad_2/Lad_2_kic/burak_pastewny.brd
      </h1>
      <div className="flex gap-[3px]">
        {captionButtons.map((b) => (
          <button
            key={b.label}
            type="button"
            aria-label={b.label}
            className="flex h-[17px] w-[22px] items-center justify-center rounded-[2px] border border-[#6a3c14] bg-[#c58048] shadow-[inset_0_0_0_1px_#dca878]"
          >
            <svg width="16" height="15" viewBox="0 0 16 15" aria-hidden="true">
              <path d={b.path} fill="#fff" fillRule="evenodd" stroke="#5a300c" strokeWidth=".5" />
            </svg>
          </button>
        ))}
      </div>
    </div>
  )
}

function WorkArea() {
  return (
    <div className="flex min-h-[540px] flex-1">
      <ToolColumn groups={leftTools} />
      <div className="flex min-w-0 flex-1 flex-col">
        <div className="min-h-0 flex-1 overflow-hidden bg-black">
          <BoardCanvas />
        </div>
        <div className="flex h-[15px] shrink-0 bg-[#cdc3ba]">
          <ArrowButton label="Scroll left" path="M6 0v8L2 4z" size="h-[15px] w-[15px]" />
          <div className="grid min-w-0 flex-1 grid-cols-[211fr_537fr_160fr] border-y border-[#8b8178]">
            <div />
            <div className="flex items-center justify-center border-x border-[#8b8178] bg-linear-to-b from-[#f8f6f4] to-[#e2dcd6]">
              <svg width="18" height="9" aria-hidden="true">
                <path d="M0 1h18M0 4h18M0 7h18" stroke="#c4bcb4" strokeDasharray="1 2" />
              </svg>
            </div>
          </div>
          <ArrowButton label="Scroll right" path="M2 0v8l4-4z" size="h-[15px] w-[15px]" />
        </div>
      </div>
      <div className="mb-4 flex w-[15px] shrink-0 flex-col bg-[#cdc3ba]">
        <ArrowButton label="Scroll up" path="M0 6h8L4 2z" size="h-[15px] w-[15px]" />
        <div className="flex min-h-0 flex-1 flex-col border-x border-[#8b8178]">
          <div className="h-1/2" />
          <div className="flex h-1/2 items-center justify-center border-t border-[#8b8178] bg-linear-to-r from-[#f8f6f4] to-[#e2dcd6]">
            <svg width="9" height="18" aria-hidden="true">
              <path d="M1 0v18M4 0v18M7 0v18" stroke="#c4bcb4" strokeDasharray="1 2" />
            </svg>
          </div>
        </div>
        <ArrowButton label="Scroll down" path="M0 2h8L4 6z" size="h-[15px] w-[15px]" dim />
      </div>
      <ToolColumn groups={rightTools} />
    </div>
  )
}

function InfoBars() {
  return (
    <div className="shrink-0 font-['DejaVu_Serif',serif] text-[13px] whitespace-pre text-black">
      <div className="flex overflow-hidden bg-[#c0c0c0] pl-[15px]">
        {moduleInfo.map((field) => (
          <dl key={field.head} className={`shrink-0 ${field.style}`}>
            <dt className="h-[14px] leading-[14px]">{field.head}</dt>
            <dd className="h-[14px] leading-[14px]">{field.value}</dd>
          </dl>
        ))}
      </div>
      <footer className="flex gap-1 pt-[2px] pr-px pb-[5px] pl-[2px]">
        {statusCells.map((cell) => (
          <div key={cell.text} className={`h-[22px] shrink-0 border-t border-r border-b border-l border-t-[#bdb5ad] border-r-white border-b-white border-l-[#bdb5ad] pl-[2px] leading-5 ${cell.style}`}>
            {cell.text === 'Block Move' ? (
              <div className="flex items-end justify-between">
                <span>{cell.text}</span>
                <svg width="12" height="12" className="mb-px shrink-0" shapeRendering="crispEdges" aria-hidden="true">
                  <path d="M9.500 1v10M6.500 4v7M3.500 7v4M.5 10v1" stroke="#b0a8a0" strokeDasharray="1 2" />
                </svg>
              </div>
            ) : (
              cell.text
            )}
          </div>
        ))}
      </footer>
    </div>
  )
}

export default function App() {
  return (
    <div className="flex min-h-screen flex-col overflow-hidden bg-[#efebe7] font-['Liberation_Sans',Arial,sans-serif]">
      <TopPanel />

      {/* sliver of the browser window behind the editor */}
      <div className="flex h-[6px] shrink-0 items-end justify-between overflow-hidden bg-[#f2efec] pr-px pl-1">
        <svg width="10" height="3" aria-hidden="true"><path d="M0 3q5-5 10 0z" fill="#2458a8" /></svg>
        <svg width="390" height="3" aria-hidden="true"><path d="M0 2.500h390" stroke="#777" strokeDasharray="2 3 1 4 1 7 3 5" /></svg>
        <div className="flex gap-[3px]">
          <span className="h-1 w-[22px] rounded-t border border-b-0 border-[#8b8178] bg-white" />
          <span className="h-1 w-[22px] rounded-t border border-b-0 border-[#8b8178] bg-white" />
          <span className="h-1 w-[22px] rounded-t border border-b-0 border-[#8b8178] bg-white" />
        </div>
      </div>

      <div className="mr-[2px] ml-[2px] flex flex-1 flex-col rounded-t-lg rounded-b-md border border-[#39302a] bg-[#efebe7]">
        <TitleBar />
        <nav className="mx-1 flex h-6 shrink-0 items-center border-b border-b-[#c4bcb4] bg-linear-to-b from-[#efebe7] to-[#e3dedb] pt-[3px] pl-px text-[13px] text-[#111]">
          {menus.map((name) => {
            // Postprocess keeps its mnemonic on the second letter
            const at = name === 'Postprocess' ? 1 : 0
            return (
              <button key={name} type="button" className="px-[7px]">
                {name.slice(0, at)}
                <span className="underline underline-offset-2">{name[at]}</span>
                {name.slice(at + 1)}
              </button>
            )
          })}
        </nav>
        <div className="mx-1 flex h-[30px] shrink-0 items-center border-b border-b-[#c4bcb4] pl-px">
          <ToolRow groups={fileTools} />
          <VerticalRule />
          <Combo label="Layer" value={'Copper\u00a0\u00a0\u00a0\u00a0(Page Up)'} width="w-[138px] ml-px" />
          <span className="w-px" />
          <ToolButton
            tool={{
              label: 'Layer pair',
              icon: (
                <>
                  <path d="M0 0h16v16H0z" fill="#00a000" />
                  <path d="M5 4h5v12H5z" fill="#a00000" />
                  <g shapeRendering="auto">
                    <circle cx="8.500" cy="4.500" r="3.300" fill="#a00000" stroke="#c8c8c8" strokeWidth="1.500" />
                    <path d="M6.500 7L4 10" stroke="#c8c8c8" />
                  </g>
                </>
              ),
            }}
          />
          <VerticalRule />
          <ToolRow groups={layerTools} />
        </div>
        <div className="mx-1 flex h-[29px] shrink-0 items-center pb-px pl-px">
          <VerticalRule />
          <Combo label="Track width" value="Track 110,0" width="w-[158px] ml-px mr-px" />
          <VerticalRule />
          <Combo label="Via size" value="Via 80,0" width="w-[148px] ml-px mr-px" />
          <VerticalRule />
          <Combo label="Grid" value="Grid 25,0" width="w-[138px] ml-px mr-px" />
          <VerticalRule />
          <Combo label="Zoom" value="" width="w-[138px] ml-px" />
        </div>
        <div className="flex flex-1 flex-col pr-[2px] pl-1">
          <WorkArea />
          <InfoBars />
        </div>
      </div>

      <div className="h-1 shrink-0 border-b-2 border-b-[#b3a490] bg-[#f6f4f2]" />
      <div className="flex h-7 shrink-0 items-center bg-[#bfb5b2] px-px text-[13px] text-[#222]">
        <ArrowButton label="Hide panel" path="M6 0v8L2 4z" size="h-[25px] w-[18px]" />
        <button type="button" aria-label="Show desktop" className="ml-[2px] flex h-[25px] w-[22px] items-center justify-center rounded-[3px] border border-[#776d64] bg-[#f3f0ec]">
          <svg width="14" height="12" viewBox="0 0 14 12" aria-hidden="true">
            <path d="M.5.500h13v11H.5z" fill="#fff" stroke="#222" />
            <path d="M3 3h8v6H3z" fill="#a85a38" stroke="#5a2a18" />
          </svg>
        </button>
        <span className="ml-1"><Grip /></span>
        <div className="ml-[2px] flex min-w-0 flex-1">
          {tasks.map((task) => (
            <button
              key={task.title}
              type="button"
              className={
                task.active
                  ? 'flex h-[25px] w-[174px] items-center gap-2 rounded-[3px] border border-[#776d64] bg-[#d6cfc9] pl-[6px]'
                  : 'flex h-[25px] w-[175px] items-center gap-2 pl-[7px]'
              }
            >
              {task.icon}
              <span className="truncate">{task.title}</span>
            </button>
          ))}
        </div>
        <ArrowButton label="Hide panel right" path="M2 0v8l4-4z" size="h-[25px] w-[18px]" />
      </div>
    </div>
  )
}
